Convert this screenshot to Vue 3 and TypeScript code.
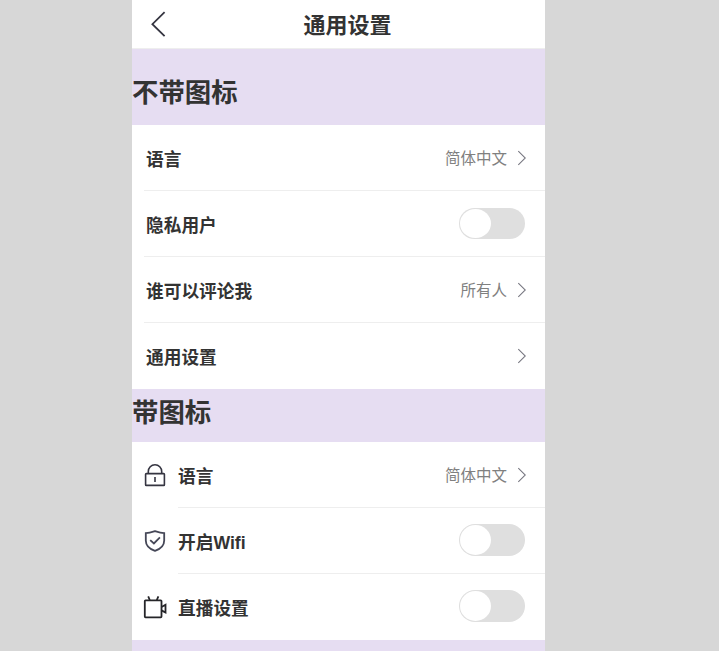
<script setup lang="ts">
import { reactive } from 'vue'

interface Item {
  label: string
  value?: string
  toggle?: boolean
  icon?: 'lock' | 'shield' | 'camera'
}

const groups: { title: string; items: Item[] }[] = [
  {
    title: '不带图标',
    items: [
      { label: '语言', value: '简体中文' },
      { label: '隐私用户', toggle: true },
      { label: '谁可以评论我', value: '所有人' },
      { label: '通用设置' },
    ],
  },
  {
    title: '带图标',
    items: [
      { label: '语言', value: '简体中文', icon: 'lock' },
      { label: '开启Wifi', toggle: true, icon: 'shield' },
      { label: '直播设置', toggle: true, icon: 'camera' },
    ],
  },
]

const enabled = reactive<Record<string, boolean>>({})
const flip = (key: string) => {
  enabled[key] = !enabled[key]
}
</script>

<template>
  <main class="phone">
    <header class="nav">
      <svg class="back" viewBox="0 0 16 26" width="16" height="26">
        <path d="M14.6 1.2 2.4 13.2 14.6 25.2" />
      </svg>
      <span class="nav-title">通用设置</span>
    </header>
    <section v-for="group in groups" :key="group.title" class="group">
      <h2 class="heading">{{ group.title }}</h2>
      <ul class="list">
        <li v-for="item in group.items" :key="item.label" class="item" :class="{ 'has-icon': item.icon }">
          <div v-if="item.icon" class="icon">
            <svg v-if="item.icon === 'lock'" viewBox="0 0 24 24" width="24" height="24">
              <rect x="2.6" y="10.6" width="18.8" height="11.8" rx=".7" />
              <path d="M5.3 10.5V8.5C5.3 4.7 8.2 1.8 12 1.8s6.7 2.9 6.7 6.7v2M12 14v5" />
            </svg>
            <svg v-else-if="item.icon === 'shield'" class="shield" viewBox="0 0 24 24" width="24" height="24">
              <path d="M2.8 4.2C6 4 9 3.1 12 2.2 15 3.1 18 4 21.2 4.2v7.3c0 5-3.7 8.5-9.2 10.4C6.5 20 2.8 16.5 2.8 11.5Z" />
              <path d="m7.2 11.1 3.7 3.4 6-6.2" />
            </svg>
            <svg v-else class="camera" viewBox="0 0 24 24" width="24" height="24">
              <rect x="1.8" y="5.3" width="16.7" height="17" rx=".7" />
              <path d="M5.2 1.4 6.8 5M15.4 1.4 13.8 5M18.5 12l4-2.2v7.8l-4-2.2" />
            </svg>
          </div>
          <div class="body">
            <span class="label">{{ item.label }}</span>
            <button
              v-if="item.toggle"
              class="switch"
              :class="{ on: enabled[item.label] }"
              role="switch"
              :aria-checked="!!enabled[item.label]"
              @click="flip(item.label)"
            ><i class="knob"></i></button>
            <template v-else>
              <span class="value">{{ item.value }}</span>
              <svg class="arrow" viewBox="0 0 9 16" width="9" height="16">
                <path d="M1.3 1.2 8.3 8l-7 6.8" />
              </svg>
            </template>
          </div>
        </li>
      </ul>
    </section>
  </main>
</template>

<style>
body {
  background: #d7d7d7;
}
</style>

<style scoped>
.phone {
  box-sizing: border-box;
  width: 413px;
  height: 651px;
  margin-left: 132px;
  overflow: hidden;
  background: #e6ddf2;
  color: #333;
  font-family: "Liberation Sans", "Noto Sans CJK SC", sans-serif;
}
.nav {
  box-sizing: border-box;
  display: grid;
  grid-template-columns: 60px 1fr 60px;
  align-items: center;
  height: 49px;
  border-bottom: 1px solid #eee;
  background: #fff;
}
svg {
  display: block;
  fill: none;
  stroke: #353541;
  stroke-width: 1.6;
}
.back {
  margin-left: 18px;
  stroke-width: 1.8;
}
.nav-title {
  padding: 4px 0 0 18px;
  text-align: center;
  font-size: 22px;
  line-height: 30px;
  font-weight: 700;
}
.heading {
  box-sizing: border-box;
  height: 53px;
  margin: 0;
  font-size: 26.4px;
  line-height: 49px;
  font-weight: 700;
}
.group:first-of-type .heading {
  height: 76px;
  padding-top: 20px;
}
.list {
  margin: 0;
  padding: 0;
  list-style: none;
  background: #fff;
}
.item {
  display: flex;
  height: 66px;
  padding-left: 12px;
}
.icon {
  display: flex;
  align-items: center;
  width: 35px;
  margin-left: -1px;
  padding-bottom: 1px;
}
.shield {
  stroke: #454757;
  stroke-width: 1.8;
}
.camera {
  stroke: #252529;
  stroke-width: 1.8;
}
.body {
  box-sizing: border-box;
  display: flex;
  flex: 1;
  align-items: center;
  padding: 0 19px 0 2px;
  border-bottom: 1px solid #eee;
}
.has-icon .body {
  padding-left: 0;
}
.item:last-child .body {
  border-bottom-color: transparent;
}
.label {
  flex: 1;
  padding-top: 5px;
  font-size: 17.7px;
  line-height: 26px;
  font-weight: 700;
}
.value {
  padding-top: 3px;
  color: #808080;
  font-size: 15.5px;
  line-height: 24px;
}
.arrow {
  margin-left: 10px;
  stroke: #777780;
  stroke-width: 1.1;
}
.switch {
  box-sizing: border-box;
  width: 66px;
  height: 31px;
  margin: 0 1px 1px 0;
  padding: 1px;
  border: 0;
  border-radius: 16px;
  background: #dfdfdf;
}
.has-icon .switch {
  height: 32px;
  margin-bottom: 2px;
}
.knob {
  display: block;
  width: 31px;
  height: 100%;
  border-radius: 50%;
  background: #fff;
  transition: transform 0.2s;
}
.on {
  background: #4cd964;
}
.on .knob {
  transform: translateX(33px);
}
</style>
